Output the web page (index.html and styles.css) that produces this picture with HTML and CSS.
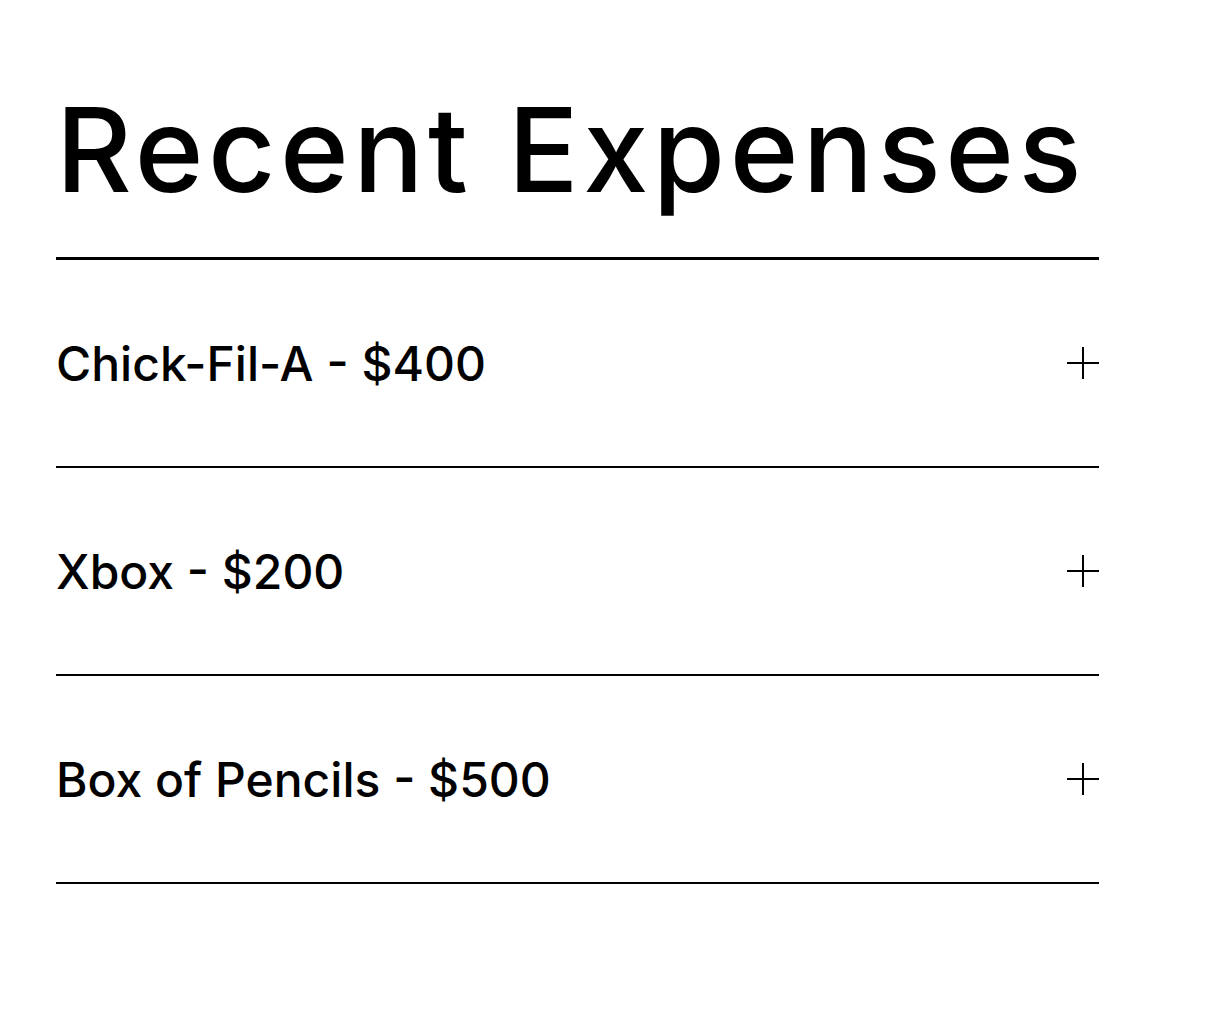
FILE: index.html
```html
<!DOCTYPE html>
<html>
<head>
<meta charset="utf-8">
<link rel="stylesheet" href="styles.css">
</head>
<body>
<main class="expenses">
  <h1 class="title">Recent Expenses</h1>
  <ul class="list">
    <li class="item"><span class="label">Chick-Fil-A - $400</span><span class="plus"></span></li>
    <li class="item"><span class="label">Xbox - $200</span><span class="plus"></span></li>
    <li class="item"><span class="label">Box of Pencils - $500</span><span class="plus"></span></li>
  </ul>
</main>
</body>
</html>
```
FILE: styles.css
```css
html, body { margin: 0; padding: 0; background: #fff; }
body { font-family: Inter, "Liberation Sans", sans-serif; color: #000; }
.expenses { width: 1043px; margin-left: 56px; }
.title {
  margin: 0;
  padding: 80px 0 37px;
  font-size: 117px;
  font-weight: 500;
  line-height: 140px;
  letter-spacing: 4.5px;
  border-bottom: 3px solid #000;
}
.list { list-style: none; margin: 0; padding: 0; }
.item {
  display: flex;
  align-items: center;
  justify-content: space-between;
  height: 206px;
  border-bottom: 2px solid #000;
}
.label { font-size: 48px; font-weight: 500; }
.plus { position: relative; width: 32px; height: 32px; }
.plus::before, .plus::after { content: ""; position: absolute; background: #000; }
.plus::before { left: 0; right: 0; top: 15px; height: 2px; }
.plus::after { top: 0; bottom: 0; left: 15px; width: 2px; }
```
